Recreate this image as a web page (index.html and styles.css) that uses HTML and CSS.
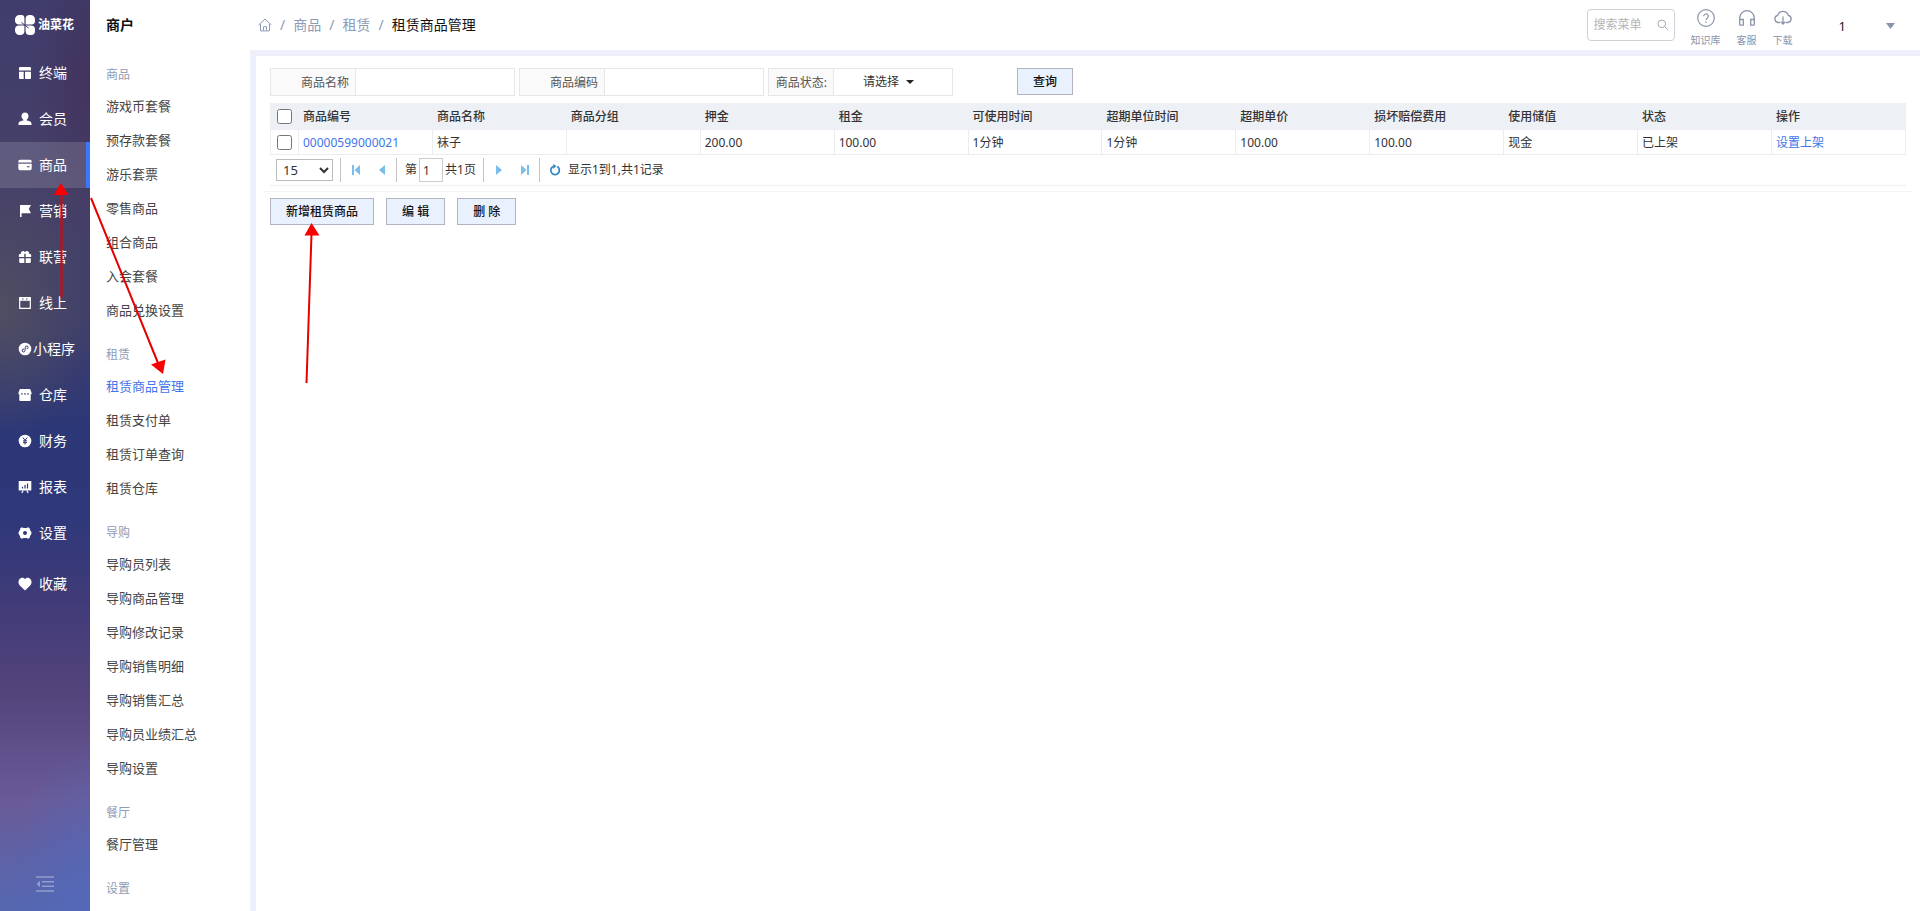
FILE: index.html
```html
<!DOCTYPE html>
<html lang="zh-CN">
<head>
<meta charset="utf-8">
<title>租赁商品管理</title>
<link rel="stylesheet" href="styles.css">
</head>
<body>
<div class="app">
  <nav class="rail" aria-label="主导航">
    <div class="brand">
      <svg class="brand-mark" viewBox="0 0 20 20" fill="#fff"><path d="M4.500 0h2A3 3 0 0 1 9.400 3v6.400H4A4 4 0 0 1 0 6V4.500A4.500 4.500 0 0 1 4.500 0z"/><path d="M10.600 4A4 4 0 0 1 14.600 0h1A4.400 4.400 0 0 1 20 4.400V6a3.400 3.400 0 0 1-3.400 3.400h-6z"/><path d="M4 10.600h5.400V16A4 4 0 0 1 6 20H4.500A4.500 4.500 0 0 1 0 15.500V14.500a4 4 0 0 1 4-3.900z"/><path d="M10.600 10.600H16a4 4 0 0 1 4 4V16a4 4 0 0 1-4 4h-1.500a4 4 0 0 1-3.900-4z"/><path d="M6.500 7.500l7 5.500" stroke="#3f3b6b" stroke-width="1"/></svg>
      <span>油菜花</span>
    </div>
    <a class="rail-item" href="#"><svg viewBox="0 0 14 14" fill="#fff"><path d="M2 1h10a1 1 0 0 1 1 1v2.500H1V2a1 1 0 0 1 1-1zM1 5.700h4.700V13H2a1 1 0 0 1-1-1zM7 5.700h6V12a1 1 0 0 1-1 1H7z"/></svg><span>终端</span></a>
    <a class="rail-item" href="#"><svg viewBox="0 0 14 14" fill="#fff"><path d="M7 .5c2.200 0 3.500 1.500 3.500 3.600C10.500 5.700 9.700 7 8.700 7.700v.8c2.300.3 4.800 1 4.800 3.200V13H.5v-1.300c0-2.200 2.500-2.900 4.800-3.200v-.8C4.300 7 3.500 5.700 3.500 4.100 3.500 2 4.800.5 7 .5z"/></svg><span>会员</span></a>
    <a class="rail-item rail-item--on" href="#"><svg viewBox="0 0 14 14" fill="#fff"><path d="M2 1.700h10A1.700 1.700 0 0 1 13.700 3.400v1H.3v-1A1.700 1.700 0 0 1 2 1.700zM.3 5.700h13.400v4.900a1.700 1.700 0 0 1-1.700 1.700H2A1.700 1.700 0 0 1 .3 10.600z"/><path d="M9 8.700h2.500" stroke="#5b567c" stroke-width="1.200"/></svg><span>商品</span></a>
    <a class="rail-item" href="#"><svg viewBox="0 0 14 14" fill="#fff"><path d="M2 1h11L10.800 5 13 9.300H3.600V13H2z"/></svg><span>营销</span></a>
    <a class="rail-item" href="#"><svg viewBox="0 0 14 14" fill="#fff"><path d="M6.300 3.700V7H.8V5.200a1.500 1.500 0 0 1 1.500-1.500h.8C2.600 2 4 .6 5.500 1c.7.200 1.200.7 1.500 1.200.3-.5.800-1 1.500-1.200C10 .6 11.400 2 10.900 3.700h.8a1.500 1.500 0 0 1 1.500 1.500V7H7.700V3.700zM1.200 8.200h5.100V13H2.500a1.300 1.300 0 0 1-1.300-1.300zM7.700 8.200h5.100v3.500a1.300 1.300 0 0 1-1.300 1.300H7.700z"/></svg><span>联营</span></a>
    <a class="rail-item" href="#"><svg viewBox="0 0 14 14" fill="none" stroke="#fff"><path d="M1.700 1.700h10.600v10.600H1.700z" stroke-width="1.200"/><path d="M1.500 3.300h11" stroke-width="3"/><path d="M4 3h1.500M8 3h1.500" stroke="#4b4767"/></svg><span>线上</span></a>
    <a class="rail-item rail-item--wide" href="#"><svg viewBox="0 0 14 14"><circle cx="7" cy="7" r="6.300" fill="#fff"/><path d="M6 7.200a1.400 1.400 0 1 0 .9 1.500l.4-3.500a1.400 1.400 0 1 1 1.200 1.600" fill="none" stroke="#3d4070" stroke-width="1"/></svg><span>小程序</span></a>
    <a class="rail-item" href="#"><svg viewBox="0 0 14 14" fill="#fff"><path d="M2.500 1h9a1 1 0 0 1 1 .7L13.600 5v1.300h-3v-.8h-1v.8H7.500v-.8h-1v.8H4.400v-.8h-1v.8h-3V5l1.100-3.300a1 1 0 0 1 1-.7zM1.300 6h11.400v6a1 1 0 0 1-1 1H2.300a1 1 0 0 1-1-1z"/><path d="M3.200 6h1.600M6.200 6h1.600M9.200 6h1.600" stroke="#33396f"/></svg><span>仓库</span></a>
    <a class="rail-item" href="#"><svg viewBox="0 0 14 14"><circle cx="7" cy="7" r="6.300" fill="#fff"/><path d="M4.800 3.500L7 6.300l2.200-2.800M7 6.300v4.200M5 6.800h4M5 8.600h4" fill="none" stroke="#2d3875" stroke-width="1"/></svg><span>财务</span></a>
    <a class="rail-item" href="#"><svg viewBox="0 0 14 14"><path d="M.7 1h12.600v9.500H.7z" fill="#fff"/><path d="M4.500 8.500V6.800M7 8.500V5M9.500 8.500V3.500" stroke="#2d3875" stroke-width="1.200"/><path d="M5.200 10.500L3.800 13M8.800 10.500l1.400 2.500" stroke="#fff" stroke-width="1.200"/></svg><span>报表</span></a>
    <a class="rail-item" href="#"><svg viewBox="0 0 14 14"><path d="M4 1.200q1 .7 1.700.7h2.600q.7 0 1.700-.7Q12 1.500 12 3.400q0 1 .8 1.600 1.400 2 0 4-.8.600-.8 1.600 0 1.900-2 2.200-1-.7-1.700-.7H5.700q-.7 0-1.700.7-2-.3-2-2.200 0-1-.8-1.600-1.400-2 0-4 .8-.6.800-1.600 0-1.900 2-2.200z" fill="#fff"/><circle cx="7" cy="7" r="2" fill="#30397a"/></svg><span>设置</span></a>
    <a class="rail-item rail-item--fav" href="#"><svg viewBox="0 0 14 14" fill="#fff"><path d="M7 13.500L2 8.700C-.4 6.200.2 2.500 2.600 1.200 4.400.3 6.200.9 7 2.200 7.800.9 9.600.3 11.400 1.200 13.800 2.500 14.400 6.200 12 8.700z"/></svg><span>收藏</span></a>
    <button class="rail-fold" type="button" aria-label="收起"><svg viewBox="0 0 18 16" fill="none" stroke="#949dcb" stroke-width="1.500"><path d="M0 1h18M6 5.700h12M6 10.300h12M0 15h18"/><path d="M4 4.800v6.400L.5 8z" fill="#949dcb" stroke="none"/></svg></button>
  </nav>

  <aside class="menu">
    <h1 class="menu-title">商户</h1>
    <h2>商品</h2>
    <a href="#">游戏币套餐</a><a href="#">预存款套餐</a><a href="#">游乐套票</a><a href="#">零售商品</a><a href="#">组合商品</a><a href="#">入会套餐</a><a href="#">商品兑换设置</a>
    <h2>租赁</h2>
    <a class="on" href="#">租赁商品管理</a><a href="#">租赁支付单</a><a href="#">租赁订单查询</a><a href="#">租赁仓库</a>
    <h2>导购</h2>
    <a href="#">导购员列表</a><a href="#">导购商品管理</a><a href="#">导购修改记录</a><a href="#">导购销售明细</a><a href="#">导购销售汇总</a><a href="#">导购员业绩汇总</a><a href="#">导购设置</a>
    <h2>餐厅</h2>
    <a href="#">餐厅管理</a>
    <h2>设置</h2>
  </aside>

  <div class="main">
    <header class="top">
      <nav class="crumbs" aria-label="面包屑">
        <a href="#" aria-label="首页"><svg viewBox="0 0 14 14" fill="none" stroke="#8d9ab8"><path d="M.6 7L7 1l6.400 6M2.500 5.700v7.200h9V5.700M5.500 12.500V8.700h3v3.800"/></svg></a>
        <span>/</span><a href="#">商品</a><span>/</span><a href="#">租赁</a><span>/</span><b>租赁商品管理</b>
      </nav>
      <div class="tools">
        <label class="search">
          <input type="text" placeholder="搜索菜单" aria-label="搜索菜单">
          <svg viewBox="0 0 12 12" fill="none" stroke="#a5a9b3"><circle cx="4.800" cy="4.800" r="3.800"/><path d="M7.700 7.700l3.600 3.600"/></svg>
        </label>
        <a class="tool" href="#"><svg viewBox="0 0 18 18" fill="none" stroke="#8b93ab" stroke-width="1.200"><circle cx="9" cy="9" r="8.300"/><path d="M6.700 7.300a2.300 2.300 0 1 1 3.500 1.900C9.300 9.800 9 10.100 9 11M9 12.300v1.400"/></svg>知识库</a>
        <a class="tool" href="#"><svg viewBox="0 0 18 18" fill="none" stroke="#8b93ab" stroke-width="1.300"><path d="M1.700 15.500V9a7.300 7.300 0 0 1 14.600 0v6.500M1.700 10.500h3.600v5.700H2.700a1 1 0 0 1-1-1zM16.300 10.500h-3.600v5.700h2.600a1 1 0 0 0 1-1z"/></svg>客服</a>
        <a class="tool" href="#"><svg viewBox="0 0 18 18" fill="none" stroke="#8b93ab" stroke-width="1.300"><path d="M6 13.500H4.200a3.600 3.600 0 0 1-.5-7.100 5.500 5.500 0 0 1 10.600 0 3.600 3.600 0 0 1-.5 7.100H12M9 7.500v7.300M6.800 12.700L9 15l2.200-2.300"/></svg>下载</a>
        <button class="user" type="button"><span>1</span><svg viewBox="0 0 9 6"><path d="M0 0h9L4.500 6z" fill="#8b93ab"/></svg></button>
      </div>
    </header>

    <main class="content">
      <form class="filters">
        <div class="field"><label for="f-name">商品名称</label><input id="f-name" type="text"></div>
        <div class="field"><label for="f-code">商品编码</label><input id="f-code" type="text"></div>
        <div class="field field--state"><label for="f-state">商品状态:</label><span class="pick"><select id="f-state"><option>请选择</option></select><svg viewBox="0 0 8 4"><path d="M0 0h8L4 4z" fill="#222"/></svg></span></div>
        <button class="btn btn--query" type="button">查询</button>
      </form>

      <table class="grid">
        <thead>
          <tr><th class="tick"><input type="checkbox" aria-label="全选"></th><th>商品编号</th><th>商品名称</th><th>商品分组</th><th>押金</th><th>租金</th><th>可使用时间</th><th>超期单位时间</th><th>超期单价</th><th>损坏赔偿费用</th><th>使用储值</th><th>状态</th><th>操作</th></tr>
        </thead>
        <tbody>
          <tr><td class="tick"><input type="checkbox" aria-label="选择袜子"></td><td><a href="#">00000599000021</a></td><td>袜子</td><td></td><td>200.00</td><td>100.00</td><td>1分钟</td><td>1分钟</td><td>100.00</td><td>100.00</td><td>现金</td><td>已上架</td><td><a href="#">设置上架</a></td></tr>
        </tbody>
      </table>

      <div class="pager">
        <select class="size" aria-label="每页条数"><option>15</option></select>
        <div class="turn">
          <button type="button" aria-label="首页"><svg viewBox="0 0 10 10" fill="#79bdea"><path d="M1 0h2v10H1zM9 0v10L3.500 5z"/></svg></button>
          <button type="button" aria-label="上一页"><svg viewBox="0 0 10 10" fill="#79bdea"><path d="M8 0v10L2 5z"/></svg></button>
        </div>
        <div class="page-no"><label for="p-no">第</label><input id="p-no" type="text" value="1"><span>共1页</span></div>
        <div class="turn">
          <button type="button" aria-label="下一页"><svg viewBox="0 0 10 10" fill="#79bdea"><path d="M2 0v10l6-5z"/></svg></button>
          <button type="button" aria-label="末页"><svg viewBox="0 0 10 10" fill="#79bdea"><path d="M7 0h2v10H7zM1 0v10l5.500-5z"/></svg></button>
        </div>
        <div class="info">
          <button type="button" aria-label="刷新"><svg viewBox="0 0 12 12"><path d="M8.300 2.600A4.300 4.300 0 1 1 4 2.500" fill="none" stroke="#2f86c4" stroke-width="1.700"/><path d="M4.200 0v5L7.400 2z" fill="#2f86c4"/></svg></button>
          <span>显示1到1,共1记录</span>
        </div>
      </div>

      <div class="actions">
        <button class="btn" type="button">新增租赁商品</button>
        <button class="btn" type="button">编 辑</button>
        <button class="btn" type="button">删 除</button>
      </div>
    </main>
  </div>
</div>

<svg class="notes" width="340" height="400" viewBox="0 0 340 400" fill="#fa0000" stroke="#e60000" stroke-width="2" aria-hidden="true">
  <path d="M61.500 297V194M91 198l67 165M306.500 383l5-149"/>
  <path stroke="none" d="M61 183l7.500 12h-15zM163 374l-12-9.500 14.500-5zM311.500 223l8 12.500h-15z"/>
</svg>
</body>
</html>
```
FILE: styles.css
```css
* { box-sizing: border-box; }

body {
  margin: 0;
  background: #fff;
  color: #333;
  font: 12px/18px "Noto Sans", "Noto Sans CJK SC", sans-serif;
}

a { color: inherit; text-decoration: none; }
button, input, select { font: inherit; color: inherit; }
button { cursor: pointer; }
svg { display: block; flex: none; }

.app { display: flex; height: 100vh; overflow: hidden; }

/* first-level navigation */
.rail {
  flex: none;
  display: flex;
  flex-direction: column;
  width: 90px;
  color: #fff;
  font-size: 14px;
  background:
    radial-gradient(ellipse 80px 170px at 100% 100%, rgba(82, 104, 186, .8), rgba(82, 104, 186, 0)),
    radial-gradient(ellipse 100px 130px at 0 34%, rgba(86, 84, 94, .75), rgba(86, 84, 94, 0)),
    radial-gradient(ellipse 60px 160px at 100% 9%, rgba(66, 44, 84, .6), rgba(66, 44, 84, 0)),
    linear-gradient(180deg, #403d6d 0, #464168 22%, #3d3d6c 36%, #2c3777 47%, #2f387a 57%, #403b78 66%, #54447c 76%, #6a5b98 88%, #5d63a8 95%, #5567b0 100%);
}
.brand {
  display: flex;
  align-items: center;
  gap: 3px;
  height: 50px;
  padding-left: 15px;
  font-size: 12px;
  font-weight: 700;
}
.brand-mark { width: 20px; height: 20px; }
.rail-item {
  display: flex;
  align-items: center;
  gap: 7px;
  height: 46px;
  padding-left: 18px;
  white-space: nowrap;
}
.rail-item svg { width: 14px; height: 14px; }
.rail-item--on {
  background: rgba(255, 255, 255, .14);
  border-right: 4px solid #3b78ff;
}
.rail-item--wide { gap: 1px; }
.rail-item--fav { margin-top: 5px; }
.rail-fold {
  margin: auto auto 19px;
  padding: 0;
  border: 0;
  background: none;
}
.rail-fold svg { width: 18px; height: 16px; }

/* second-level menu */
.menu {
  flex: none;
  width: 160px;
  padding-left: 16px;
  overflow: hidden;
  color: #444;
  font-size: 13px;
}
.menu-title {
  height: 47px;
  margin: 0;
  color: #111;
  font-size: 14px;
  font-weight: 700;
  line-height: 50px;
}
.menu h2 {
  height: 42px;
  margin: 0;
  padding-top: 19px;
  color: #8f9bb8;
  font-size: 12px;
  font-weight: 400;
  line-height: 18px;
}
.menu a { display: block; line-height: 34px; }
.menu a.on { color: #3f75e8; }

.main { flex: 1; min-width: 0; display: flex; flex-direction: column; }

/* top bar */
.top {
  display: flex;
  justify-content: space-between;
  height: 50px;
  padding: 0 25px 0 8px;
}
.crumbs {
  display: flex;
  align-items: center;
  gap: 8px;
  color: #8d9ab8;
  font-size: 14px;
}
.crumbs svg { width: 14px; height: 14px; }
.crumbs b { color: #111; font-weight: 400; }
.tools { display: flex; align-items: center; }
.search {
  display: flex;
  align-items: center;
  width: 88px;
  height: 32px;
  margin-right: 16px;
  padding: 0 5px 0 6px;
  border: 1px solid #cfd1d6;
  border-radius: 4px;
}
.search input {
  flex: 1;
  min-width: 0;
  padding: 0;
  border: 0;
  outline: 0;
  background: none;
}
.search input::placeholder { color: #b4b4b4; }
.search svg { width: 12px; height: 12px; }
.tool {
  display: flex;
  flex-direction: column;
  align-items: center;
  gap: 6px;
  margin-right: 16px;
  padding-top: 6px;
  color: #8b93ab;
  font-size: 10px;
  line-height: 14px;
}
.tool svg { width: 18px; height: 18px; }
.user {
  display: flex;
  align-items: center;
  gap: 40px;
  margin-left: 30px;
  padding: 2px 0 0;
  border: 0;
  background: none;
  color: #222;
  font-size: 13px;
}
.user svg { width: 9px; height: 6px; }

.content {
  flex: 1;
  padding: 12px 14px;
  border-top: 6px solid #edf0fb;
  border-left: 6px solid #edf0fb;
}

/* filter row */
.filters { display: flex; gap: 4px; height: 28px; margin-bottom: 7px; }
.field { display: flex; border: 1px solid #e6e6e6; }
.field label {
  width: 84px;
  padding-right: 6px;
  background: #fafafa;
  color: #555;
  line-height: 28px;
  height: 26px;
  text-align: right;
}
.field input {
  width: 159px;
  padding: 0 6px;
  border: 0;
  border-left: 1px solid #e6e6e6;
  outline: 0;
}
.field--state label { width: 64px; }
.pick {
  display: grid;
  align-items: center;
  width: 119px;
  border-left: 1px solid #e6e6e6;
}
.pick > * { grid-area: 1 / 1; }
.pick select {
  width: 100%;
  height: 26px;
  padding: 0 0 0 29px;
  border: 0;
  background: none;
  appearance: none;
}
.pick svg { justify-self: end; width: 8px; height: 4px; margin-right: 38px; pointer-events: none; }
.btn {
  height: 27px;
  padding: 0 15px;
  border: 1px solid #b0b5c0;
  background: #e9f0fe;
  color: #111;
  font-weight: 500;
  line-height: 25px;
}
.btn--query { margin-left: 60px; }

/* data table */
.grid {
  width: 100%;
  border-collapse: collapse;
  table-layout: fixed;
}
.grid th, .grid td {
  height: 25px;
  padding: 1px 0 0 4px;
  border: 1px solid #ebedf0;
  text-align: left;
}
.grid th {
  height: 26px;
  border-color: #edf0f5;
  background: #edf0f5;
  font-weight: 500;
}
.grid .tick { width: 28px; padding: 0 0 0 6px; }
.grid .tick input { display: block; width: 15px; height: 15px; margin: 0; }
.grid a { color: #3f75e8; }

/* pagination */
.pager {
  display: flex;
  align-items: center;
  height: 31px;
  padding-left: 6px;
  border-bottom: 1px solid #f0f0f0;
}
.pager button { padding: 0; border: 0; background: none; }
.size {
  width: 57px;
  height: 22px;
  margin-right: 7px;
  padding: 0 0 0 2px;
  border: 1px solid #bbb;
  background: #fff;
  font-size: 13px;
}
.turn, .page-no, .info {
  display: flex;
  align-items: center;
  height: 24px;
  border-left: 1px solid #c4c4c4;
}
.turn { width: 56px; padding-left: 10px; gap: 16px; }
.turn svg { width: 10px; height: 10px; }
.page-no { width: 87px; padding-left: 8px; gap: 2px; }
.page-no input {
  width: 24px;
  height: 24px;
  padding: 0 3px;
  border: 1px solid #ccc;
}
.info { padding-left: 9px; gap: 7px; }
.info svg { width: 12px; height: 12px; }

.actions {
  display: flex;
  gap: 12px;
  margin: 5px -6px 0;
  padding: 6px 6px 0;
  border-top: 1px solid #f5f5f5;
}

/* red pointers drawn over the page */
.notes { position: absolute; top: 0; left: 0; pointer-events: none; }
```
